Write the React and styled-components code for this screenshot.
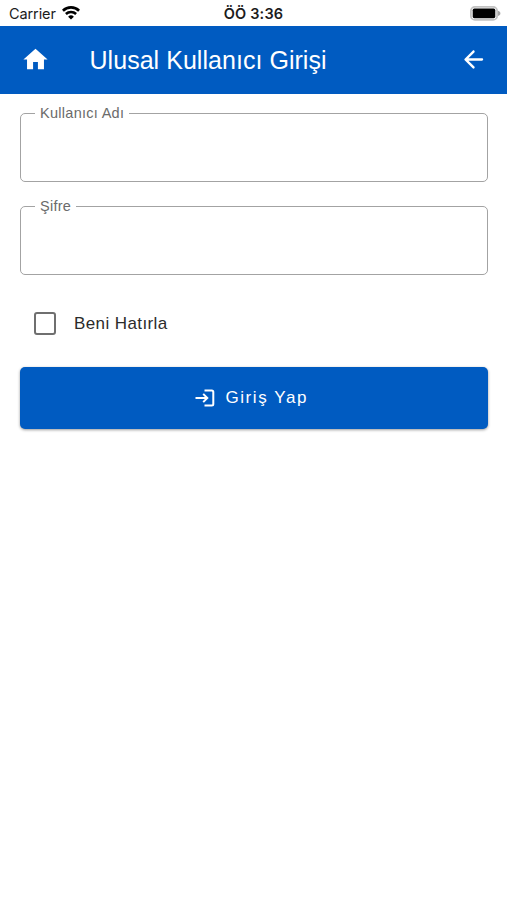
import React, { useState } from "react";
import styled, { createGlobalStyle } from "styled-components";

const App = () => {
  const [remember, setRemember] = useState(false);

  return (
    <Screen>
      <GlobalStyle />
      <StatusBar>
        <Carrier>
          <span>Carrier</span>
          <WifiIcon />
        </Carrier>
        <Clock>ÖÖ 3:36</Clock>
        <BatteryIcon />
      </StatusBar>
      <Toolbar>
        <IconButton aria-label="Ana Sayfa">
          <svg width="29" height="29" viewBox="0 0 24 24" fill="currentColor">
            <path d="M10 20v-6h4v6h5v-8h3L12 3 2 12h3v8z" />
          </svg>
        </IconButton>
        <Title>Ulusal Kullanıcı Girişi</Title>
        <IconButton aria-label="Geri">
          <svg width="29" height="29" viewBox="0 0 24 24" fill="currentColor">
            <path d="M19 11H7.83l4.88-4.88c.39-.39.39-1.03 0-1.42-.39-.39-1.02-.39-1.41 0l-6.59 6.59c-.39.39-.39 1.02 0 1.41l6.59 6.59c.39.39 1.02.39 1.41 0 .39-.39.39-1.02 0-1.41L7.83 13H19c.55 0 1-.45 1-1s-.45-1-1-1z" />
          </svg>
        </IconButton>
      </Toolbar>
      <Form onSubmit={(e) => e.preventDefault()}>
        <Field>
          <legend>Kullanıcı Adı</legend>
          <input type="text" aria-label="Kullanıcı Adı" />
        </Field>
        <Field>
          <legend>Şifre</legend>
          <input type="password" aria-label="Şifre" />
        </Field>
        <Remember>
          <input
            type="checkbox"
            checked={remember}
            onChange={() => setRemember(!remember)}
          />
          <span>Beni Hatırla</span>
        </Remember>
        <SubmitButton type="submit">
          <LoginIcon />
          <span>Giriş Yap</span>
        </SubmitButton>
      </Form>
    </Screen>
  );
};

const WifiIcon = () => (
  <svg width="18" height="14" viewBox="0 0 18 14" fill="none" stroke="#000">
    <path d="M0.9 4.7a11.5 11.5 0 0 1 16.2 0" strokeWidth="2.7" />
    <path d="M3.9 8a7.2 7.2 0 0 1 10.2 0" strokeWidth="2.5" />
    <path d="M9 13.6 6.1 10.7a4.2 4.2 0 0 1 5.8 0z" fill="#000" stroke="none" />
  </svg>
);

const BatteryIcon = () => (
  <svg width="31" height="15" viewBox="0 0 31 15">
    <rect x="0.9" y="0.9" width="26.2" height="13" rx="4" fill="#fff" stroke="#c2c2c2" strokeWidth="1.8" />
    <rect x="2.7" y="2.6" width="22.6" height="9.6" rx="1.6" fill="#000" />
    <path d="M28 4.8c1.5.6 2.4 1.5 2.4 2.6s-.9 2-2.4 2.6z" fill="#a5a5a5" />
  </svg>
);

const LoginIcon = () => (
  <svg width="20" height="18" viewBox="0 0 20 18" fill="none" stroke="#fff" strokeWidth="2">
    <path d="M0.5 9h12M8.2 4.9 12.3 9l-4.1 4.1" />
    <path d="M9.5 1.5h7.3a1.5 1.5 0 0 1 1.5 1.5v12a1.5 1.5 0 0 1-1.5 1.5H9.5" />
  </svg>
);

const GlobalStyle = createGlobalStyle`
  * {
    box-sizing: border-box;
  }

  body {
    margin: 0;
    background: #fff;
    font-family: "Liberation Sans", Arial, sans-serif;
  }
`;

const Screen = styled.div`
  width: 100%;
  min-height: 100vh;
  display: flex;
  flex-direction: column;
`;

const StatusBar = styled.div`
  height: 25.5px;
  display: grid;
  grid-template-columns: 1fr auto 1fr;
  align-items: center;
  padding: 1px 6px 0 9px;
  color: #1c1c1c;
  font-family: Inter, sans-serif;
  font-size: 14.5px;

  > svg {
    justify-self: end;
  }
`;

const Carrier = styled.div`
  display: flex;
  align-items: center;
  gap: 6px;
  letter-spacing: -0.1px;
`;

const Clock = styled.span`
  margin-left: -3px;
  font-weight: 600;
  letter-spacing: 0.2px;
`;

const Toolbar = styled.header`
  height: 68px;
  display: flex;
  align-items: center;
  padding: 0 19.5px 0 20.5px;
  background: #005bc1;
  color: #fff;
`;

const IconButton = styled.button`
  display: flex;
  padding: 0;
  border: 0;
  background: none;
  color: inherit;
  cursor: pointer;
`;

const Title = styled.h1`
  flex: 1;
  margin: 1px 0 0 40px;
  font-size: 25px;
  font-weight: 400;
  letter-spacing: 0.04px;
`;

const Form = styled.form`
  display: flex;
  flex-direction: column;
  padding: 12px 19.5px 0 20px;
`;

const Field = styled.fieldset`
  height: 76px;
  min-width: 0;
  margin: 0 0 17px;
  padding: 0 14px;
  border: 1px solid #a3a3a3;
  border-radius: 5px;

  > legend {
    padding: 0 5px;
    color: #6b6b6b;
    font-size: 14.5px;
    line-height: 15px;
    letter-spacing: 0.28px;
  }

  > input {
    width: 100%;
    height: 54px;
    padding: 0;
    border: 0;
    outline: 0;
    background: none;
    font-size: 19px;
  }
`;

const Remember = styled.label`
  display: flex;
  align-items: center;
  gap: 18px;
  height: 30px;
  margin: 17px 0 28px 13.5px;
  color: #2b2b2b;
  font-size: 17px;
  letter-spacing: 0.4px;

  > input {
    appearance: none;
    width: 22.5px;
    height: 22.5px;
    margin: 0;
    border: 2px solid #6f6f6f;
    border-radius: 3px;
  }

  > input:checked {
    border-color: #005bc1;
    background: #005bc1;
  }
`;

const SubmitButton = styled.button`
  height: 62px;
  display: flex;
  align-items: center;
  justify-content: center;
  gap: 10px;
  padding: 1px 4px 0 0;
  border: 0;
  border-radius: 5px;
  background: #005bc1;
  box-shadow: 0 1px 3px rgba(0, 0, 0, 0.4);
  color: #fff;
  font-family: inherit;
  font-size: 17px;
  letter-spacing: 1.6px;
  cursor: pointer;
`;

export default App;
